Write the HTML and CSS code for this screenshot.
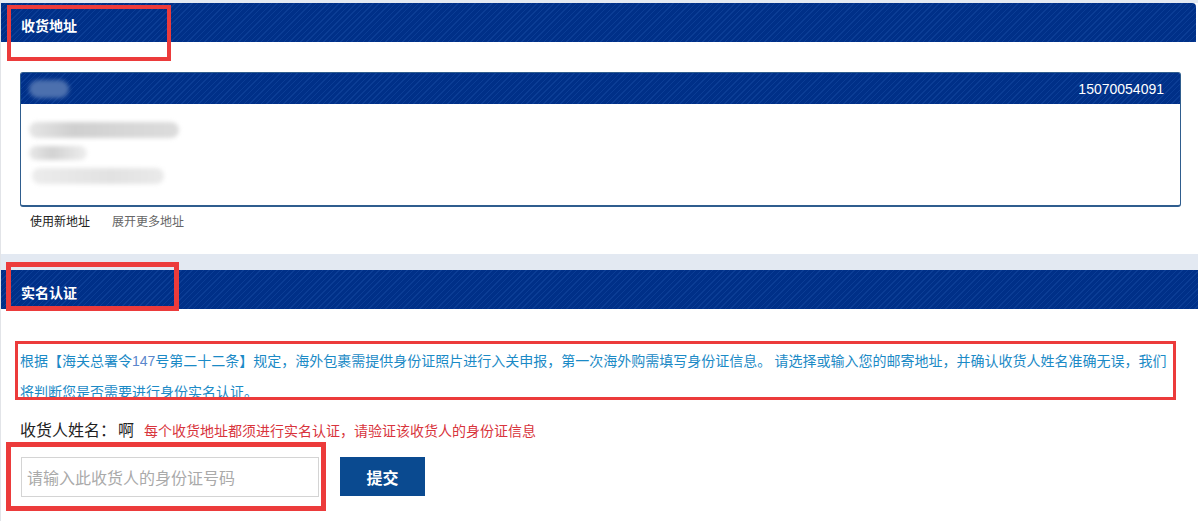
FILE: index.html
```html
<!DOCTYPE html>
<html lang="zh-CN">
<head>
<meta charset="utf-8">
<title>收货地址</title>
<link rel="stylesheet" href="styles.css">
</head>
<body>
<div class="page">
  <div class="strip strip-top"></div>
  <section class="sec sec-addr">
    <h2 class="bar bar-round">收货地址</h2>
    <div class="sec-body">
      <div class="card">
        <div class="card-head">
          <span class="blob blob-name"></span>
          <span class="phone">15070054091</span>
        </div>
        <div class="card-body">
          <div class="blob blob-1"></div>
          <div class="blob blob-2"></div>
          <div class="blob blob-3"></div>
        </div>
      </div>
      <div class="links">
        <a class="link link-new">使用新地址</a>
        <a class="link link-more">展开更多地址</a>
      </div>
    </div>
  </section>
  <div class="strip strip-mid"></div>
  <section class="sec sec-id">
    <h2 class="bar">实名认证</h2>
    <div class="id-body">
      <p class="notice">根据【海关总署令<span class="num">147</span>号第二十二条】规定，海外包裹需提供身份证照片进行入关申报，第一次海外购需填写身份证信息。 请选择或输入您的邮寄地址，并确认收货人姓名准确无误，我们将判断您是否需要进行身份实名认证。</p>
      <div class="name-row">
        <span class="label">收货人姓名：</span><span class="name">啊</span>
        <span class="warn">每个收货地址都须进行实名认证，请验证该收货人的身份证信息</span>
      </div>
      <div class="form-row">
        <input class="id-input" type="text" placeholder="请输入此收货人的身份证号码">
        <button class="submit" type="button">提交</button>
      </div>
    </div>
  </section>
  <div class="mark mark-1"></div>
  <div class="mark mark-2"></div>
  <div class="mark mark-3"></div>
  <div class="mark mark-4"></div>
</div>
</body>
</html>
```

FILE: styles.css
```css
html, body {
  margin: 0;
  padding: 0;
  background: #fff;
}
body {
  font-family: "Noto Sans CJK SC", "Liberation Sans", sans-serif;
  color: #333;
}
.page {
  position: relative;
  width: 1198px;
  height: 521px;
  overflow: hidden;
  box-sizing: border-box;
  border-left: 1px solid #e2e4e8;
}
.strip {
  background: #e3e9f2;
}
.strip-top { height: 3px; }
.strip-mid { height: 16px; }

.bar {
  margin: 0;
  height: 39px;
  box-sizing: border-box;
  padding: 0 0 0 20px;
  line-height: 44px;
  font-size: 14px;
  font-weight: bold;
  color: #fff;
  background-color: #003088;
  background-image: repeating-linear-gradient(135deg, #003088 0, #003088 3px, #0b3d95 3px, #0b3d95 4px);
}
.bar-round {
  border-top-right-radius: 4px;
  margin-right: 2px;
}
.sec-addr .bar { line-height: 44px; }
.sec-id .bar { line-height: 45px; }

.sec-body {
  padding: 30px 17px 0 19px;
  height: 212px;
  box-sizing: border-box;
}
.card {
  height: 135px;
  box-sizing: border-box;
  border: 1px solid #2f5d8e;
  border-bottom-width: 2px;
  border-radius: 3px;
  overflow: hidden;
}
.card-head {
  height: 31px;
  display: flex;
  align-items: center;
  justify-content: space-between;
  padding: 0 16px 0 8px;
  background-color: #003088;
  background-image: repeating-linear-gradient(135deg, #003088 0, #003088 3px, #0b3d95 3px, #0b3d95 4px);
}
.phone {
  font-family: "Liberation Sans", Arial, sans-serif;
  font-size: 14px;
  color: #fff;
}
.blob {
  display: block;
  border-radius: 10px;
  filter: blur(2px);
}
.blob-name {
  width: 40px;
  height: 18px;
  background: #4c70ae;
  border-radius: 9px;
}
.card-body {
  padding: 18px 0 0 8px;
}
.blob-1 {
  width: 150px;
  height: 16px;
  background: linear-gradient(90deg, #e6e6e6, #cfcfcf 30%, #d6d6d6 60%, #dcdcdc);
}
.blob-2 {
  width: 58px;
  height: 14px;
  margin-top: 8px;
  background: linear-gradient(90deg, #e8e8e8, #d2d2d2 40%, #eee);
}
.blob-3 {
  width: 132px;
  height: 16px;
  margin-top: 8px;
  margin-left: 3px;
  background: linear-gradient(90deg, #ececec, #e2e2e2 60%, #eaeaea);
}
.links {
  display: flex;
  gap: 22px;
  padding: 5px 0 0 10px;
  font-size: 12px;
  line-height: 17px;
}
.link-new { color: #222; }
.link-more { color: #666; }

.id-body {
  padding: 36px 20px 0 19px;
}
.notice {
  margin: 0;
  width: 1155px;
  font-size: 14px;
  line-height: 30px;
  color: #1b8ac6;
}
.num {
  font-family: "Liberation Sans", Arial, sans-serif;
  color: #5a86cc;
}
.name-row {
  margin-top: 11px;
  display: flex;
  align-items: baseline;
  line-height: 24px;
}
.label {
  font-size: 16px;
  color: #222;
}
.name {
  font-size: 16px;
  color: #222;
  margin-left: 2px;
}
.warn {
  margin-left: 10px;
  font-size: 14px;
  color: #d8343c;
}
.form-row {
  margin-top: 15px;
  display: flex;
  gap: 21px;
  margin-left: 1px;
}
.id-input {
  width: 298px;
  height: 40px;
  box-sizing: border-box;
  border: 1px solid #d4d4d4;
  padding: 0 5px;
  font-family: "Noto Sans CJK SC", sans-serif;
  font-size: 16px;
  color: #333;
  outline: none;
}
.id-input::placeholder { color: #aaa; }
.submit {
  width: 85px;
  height: 39px;
  border: 0;
  background: #0a4a90;
  color: #fff;
  font-family: "Noto Sans CJK SC", sans-serif;
  font-size: 16px;
  font-weight: bold;
}

.mark {
  position: absolute;
  box-sizing: border-box;
  border-style: solid;
  border-color: #ec3b3b;
  pointer-events: none;
}
.mark-1 { left: 6px; top: 5px; width: 164px; height: 56px; border-width: 4px; }
.mark-2 { left: 5px; top: 262px; width: 173px; height: 49px; border-width: 5px; }
.mark-3 { left: 14px; top: 341px; width: 1161px; height: 59px; border-width: 3px; }
.mark-4 { left: 5px; top: 442px; width: 320px; height: 69px; border-width: 5px; }
```
